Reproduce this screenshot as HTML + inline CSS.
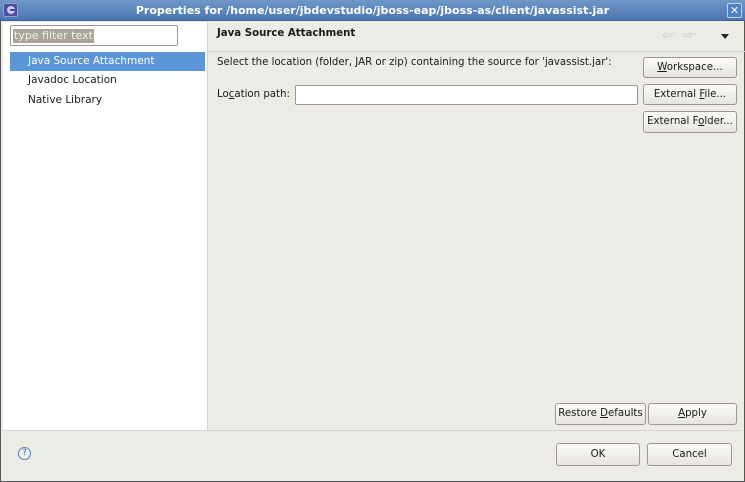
<!DOCTYPE html>
<html><head><meta charset="utf-8"><style>
*{box-sizing:border-box;margin:0;padding:0}
body{width:745px;height:482px;overflow:hidden;background:#edebe6;font-family:"DejaVu Sans","Liberation Sans",sans-serif;font-size:10.2px;color:#1a1a1a;position:relative;white-space:nowrap}
.a{position:absolute}
.title{left:0;top:0;width:745px;height:21px;background:linear-gradient(#6f97c9,#4a76b0);border-bottom:1px solid #3a5f90}
.title span{position:absolute;left:0;width:745px;text-align:center;top:4px;color:#fff;font-weight:bold;font-size:11px}
.btn{position:absolute;border:1px solid #9c9890;border-radius:3px;background:linear-gradient(#fbfaf8,#e8e5df);text-align:center;line-height:19px;font-size:10.2px;white-space:nowrap}
u{text-decoration:underline}
</style></head><body>
<div class="a title"><span>Properties for /home/user/jbdevstudio/jboss-eap/jboss-as/client/javassist.jar</span>
<div class="a" style="left:3px;top:3px;width:15px;height:14px;background:#4d4ca0;border:1px solid #8fa0d8;border-radius:2px"><div class="a" style="left:3px;top:2px;width:8px;height:8px;border-radius:50%;background:#c8c8f0"></div><div class="a" style="left:6px;top:5px;width:6px;height:2px;background:#4d4ca0"></div></div>
<div class="a" style="left:727px;top:3px;width:15px;height:15px;border:1px solid #c0d4ee;border-radius:2px;background:#4f7fc0;color:#fff;font-size:11px;line-height:13px;text-align:center;font-weight:bold">✕</div>
</div>
<div class="a" style="left:0;top:21px;width:1px;height:461px;background:#555"></div>
<div class="a" style="left:744px;top:21px;width:1px;height:461px;background:#555"></div>
<div class="a" style="left:0;top:481px;width:745px;height:1px;background:#555"></div>
<div class="a" style="left:3px;top:22px;width:205px;height:408px;background:#fff;border-right:1px solid #d8d5cf"></div>
<div class="a" style="left:10px;top:25px;width:168px;height:21px;border:1px solid #9c9890;border-radius:2px;background:#fff"><span class="a" style="left:2px;top:3px;background:#a9a398;color:#f4f2ee;padding:0 1px;line-height:14px;font-size:11px">type filter text</span></div>
<div class="a" style="left:10px;top:52px;width:195px;height:19px;background:#5b96d6;color:#fff;padding-left:18px;line-height:19px;font-size:10.5px">Java Source Attachment</div>
<div class="a" style="left:28px;top:74px;font-size:10.5px">Javadoc Location</div>
<div class="a" style="left:28px;top:94px;font-size:10.5px">Native Library</div>
<div class="a" style="left:217px;top:28px;font-weight:bold">Java Source Attachment</div>
<div class="a" style="left:662px;top:28px;color:#c8c5bf;font-size:12px">⇦<span style="font-size:7px">˅</span> &nbsp;⇨<span style="font-size:7px">˅</span></div>
<div class="a" style="left:721px;top:34px;width:0;height:0;border-left:4px solid transparent;border-right:4px solid transparent;border-top:5px solid #222"></div>
<div class="a" style="left:208px;top:51px;width:537px;height:1px;background:#d8d5cf"></div>
<div class="a" style="left:217px;top:57px">Select the location (folder, JAR or zip) containing the source for 'javassist.jar':</div>
<div class="a" style="left:217px;top:89px">Lo<u>c</u>ation path:</div>
<div class="a" style="left:295px;top:85px;width:343px;height:20px;border:1px solid #9c9890;border-radius:2px;background:#fff"></div>
<div class="btn" style="left:643px;top:57px;width:94px;height:21px"><u>W</u>orkspace...</div>
<div class="btn" style="left:643px;top:84px;width:94px;height:21px">External <u>F</u>ile...</div>
<div class="btn" style="left:643px;top:111px;width:94px;height:22px">External F<u>o</u>lder...</div>
<div class="btn" style="left:555px;top:403px;width:91px;height:22px">Restore <u>D</u>efaults</div>
<div class="btn" style="left:648px;top:403px;width:89px;height:22px"><u>A</u>pply</div>
<div class="a" style="left:3px;top:430px;width:739px;height:1px;background:#d8d5cf"></div>
<div class="a" style="left:18px;top:447px;width:13px;height:13px;border:1px solid #5a7fb8;border-radius:50%;font-size:9px;line-height:11px;text-align:center;color:#3a5f98;background:#eef2fa">?</div>
<div class="btn" style="left:556px;top:443px;width:84px;height:23px;line-height:21px">OK</div>
<div class="btn" style="left:647px;top:443px;width:85px;height:23px;line-height:21px">Cancel</div>
</body></html>
